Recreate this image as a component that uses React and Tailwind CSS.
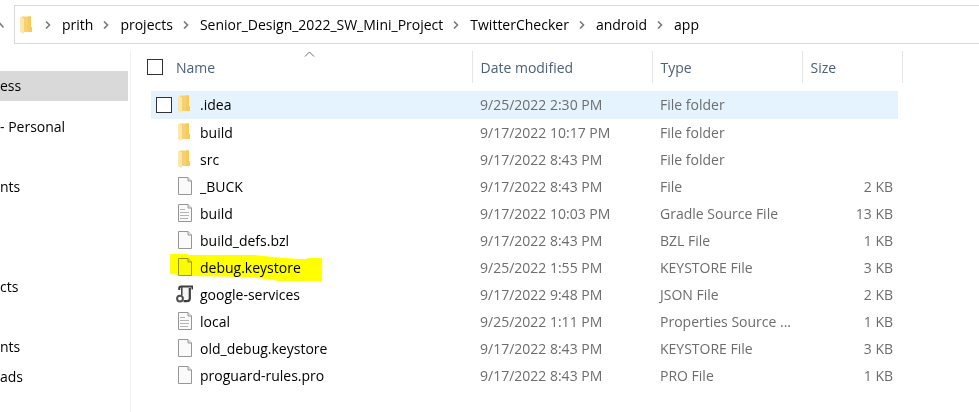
const crumbs = ["prith", "projects", "Senior_Design_2022_SW_Mini_Project", "TwitterChecker", "android", "app"];

const files = [
  { name: ".idea", date: "9/25/2022 2:30 PM", type: "File folder", size: "", icon: "folder", hovered: true },
  { name: "build", date: "9/17/2022 10:17 PM", type: "File folder", size: "", icon: "folder" },
  { name: "src", date: "9/17/2022 8:43 PM", type: "File folder", size: "", icon: "folder" },
  { name: "_BUCK", date: "9/17/2022 8:43 PM", type: "File", size: "2 KB", icon: "file" },
  { name: "build", date: "9/17/2022 10:03 PM", type: "Gradle Source File", size: "13 KB", icon: "text" },
  { name: "build_defs.bzl", date: "9/17/2022 8:43 PM", type: "BZL File", size: "1 KB", icon: "file" },
  { name: "debug.keystore", date: "9/25/2022 1:55 PM", type: "KEYSTORE File", size: "3 KB", icon: "file", marked: true },
  { name: "google-services", date: "9/17/2022 9:48 PM", type: "JSON File", size: "2 KB", icon: "json" },
  { name: "local", date: "9/25/2022 1:11 PM", type: "Properties Source ...", size: "1 KB", icon: "text" },
  { name: "old_debug.keystore", date: "9/17/2022 8:43 PM", type: "KEYSTORE File", size: "3 KB", icon: "file" },
  { name: "proguard-rules.pro", date: "9/17/2022 8:43 PM", type: "PRO File", size: "1 KB", icon: "file" },
];

function FolderIcon() {
  return (
    <svg className="h-[18px] w-4 shrink-0" viewBox="0 0 16 18" aria-hidden="true">
      <path d="M3 0.5h9v10.5h1v5H3z" fill="#f7d070" />
      <path d="M9 0.5h3v10.5h1v5H9z" fill="#f5ca60" />
      <path d="M1 0.5l4 2v15l-1 0.3l-3-1.8z" fill="#ffe8a6" />
    </svg>
  );
}

function FileIcon({ lines }) {
  return (
    <svg className="h-[18px] w-4 shrink-0" viewBox="0 0 16 18" aria-hidden="true">
      <path d="M1.5 0.5h9.5l3.5 3.5v13.5h-13z" fill="#fafafa" stroke="#969696" />
      <path d="M11 0.5v3.5h3.5" fill="#e8e8e8" stroke="#969696" />
      {lines && <path d="M3 5.5h5M3 8.5h9M3 11.5h6M9 11.5h3M3 14.5h8" fill="none" stroke="#b4b4b4" />}
    </svg>
  );
}

function JsonIcon() {
  return (
    <svg className="-ml-px h-[18px] w-[17px] shrink-0" viewBox="0 0 17 18" fill="none" aria-hidden="true">
      <path d="M5.5 1.5h10v2.5h-1.5v9.5q0 2.5-3 2.5h-4" fill="#f5f5f5" />
      <path d="M3.2 5V3.2q0-1.7 2-1.7h11.3v3" stroke="#3f3f3f" strokeWidth="2" />
      <path d="M5.8 2v8" stroke="#4a4a4a" strokeWidth="1.6" />
      <path d="M13.8 3v10.5q0 2.6-2.8 2.6H7.5" stroke="#3f3f3f" strokeWidth="2.2" />
      <circle cx="4" cy="13.6" r="2.9" fill="#fff" stroke="#505050" strokeWidth="2" />
    </svg>
  );
}

function ItemIcon({ kind }) {
  if (kind === "folder") return <FolderIcon />;
  if (kind === "json") return <JsonIcon />;
  return <FileIcon lines={kind === "text"} />;
}

function Chevron() {
  return (
    <svg className="mr-[11px] ml-[10px] h-2 w-[6px] shrink-0" viewBox="0 0 6 8" fill="none" aria-hidden="true">
      <path d="M1 0.5l3.5 3.5L1 7.5" stroke="#7a7a7a" strokeWidth="1.6" />
    </svg>
  );
}

function AddressBar() {
  return (
    <header className="flex items-center pt-[5px]">
      <button type="button" aria-label="Up" className="w-[14px]">
        <svg className="h-2 w-1" viewBox="0 0 4 8" fill="none" aria-hidden="true">
          <path d="M-3 7l3-4.500l3.500 4" stroke="#7a7a7a" strokeWidth="1.500" />
        </svg>
      </button>
      <nav aria-label="Path" className="flex h-[39px] flex-1 items-center border-y border-l border-[#d9d9d9] pl-1">
        <FolderIcon />
        <ol className="flex items-center">
          {crumbs.map((crumb) => (
            <li key={crumb} className="flex items-center">
              <Chevron />
              <a href="#" className="text-black">{crumb}</a>
            </li>
          ))}
        </ol>
      </nav>
    </header>
  );
}

function SideItem({ children, className = "" }) {
  return (
    <li className={`flex h-[30px] items-center ${className}`}>
      <a href="#">{children}</a>
    </li>
  );
}

function Sidebar() {
  return (
    <nav aria-label="Folders" className="w-[131px] shrink-0 border-r border-[#f0f0f0] pt-5 pr-[2px]">
      <ul>
        <SideItem className="bg-[#d9d9d9]">ess</SideItem>
        <SideItem className="mt-[11px]">- Personal</SideItem>
        <SideItem className="mt-[30px]">nts</SideItem>
        <SideItem className="mt-[70px]">cts</SideItem>
        <SideItem className="mt-[30px]">nts</SideItem>
        <SideItem>ads</SideItem>
      </ul>
    </nav>
  );
}

const checkbox = "block h-4 w-4 shrink-0 appearance-none border border-[#333333] bg-white checked:bg-[#0078d7]";

function FileRow({ file }) {
  const fill = file.hovered ? "bg-[#e5f3ff]" : "";
  return (
    <tr className={file.hovered ? "h-7" : "h-[27px]"}>
      <td />
      <td className={`pl-[5px] ${fill}`}>
        <div className="relative flex items-center">
          {file.hovered ? (
            <input type="checkbox" aria-label={`Select ${file.name}`} className={checkbox} />
          ) : (
            <span className="w-4" />
          )}
          <span className="mr-[7px] ml-[5px] flex w-4 justify-end pb-[2px]">
            <ItemIcon kind={file.icon} />
          </span>
          <span className="text-black">{file.name}</span>
          {file.marked && (
            <svg
              className="pointer-events-none absolute -top-1 left-[14px] h-7 w-[152px] mix-blend-multiply"
              viewBox="0 0 152 28"
              aria-hidden="true"
            >
              <path d="M0 0H18V1H85L103 3L128 5H137V4H152V27H108L103 26L78 23L20 22L0 20Z" fill="#ffff00" />
            </svg>
          )}
        </div>
      </td>
      <td className={`pl-2 ${fill}`}>{file.date}</td>
      <td className={`pl-2 ${fill}`}>{file.type}</td>
      <td className={`pr-[5px] text-right ${fill}`}>{file.size}</td>
      <td />
    </tr>
  );
}

function HeaderCell({ children, span }) {
  return (
    <th colSpan={span} className="border-r border-[#e5e5e5] pl-2 font-normal">
      <button type="button" className="pt-[2px]">{children}</button>
    </th>
  );
}

function FileTable() {
  return (
    <table className="w-[771px] table-fixed self-start text-left text-[#6d6d6d]">
      <colgroup>
        <col className="w-5" />
        <col className="w-[321px]" />
        <col className="w-[180px]" />
        <col className="w-[150px]" />
        <col className="w-24" />
        <col className="w-1" />
      </colgroup>
      <thead className="text-[#4c607a]">
        <tr className="h-8">
          <th colSpan={2} className="relative border-r border-[#e5e5e5] pl-4 font-normal">
            <div className="flex items-center gap-[13px]">
              <input type="checkbox" aria-label="Select all" className={checkbox} />
              <button type="button" className="pt-[2px]">Name</button>
            </div>
            <svg className="absolute top-0 left-[173px] h-[6px] w-[11px]" viewBox="0 0 11 6" fill="none" aria-hidden="true">
              <path d="M1 5.500l4.500-4.500l4.500 4.500" stroke="#6d6d6d" />
            </svg>
          </th>
          <HeaderCell>Date modified</HeaderCell>
          <HeaderCell>Type</HeaderCell>
          <HeaderCell span={2}>Size</HeaderCell>
        </tr>
      </thead>
      <tbody className="before:block before:h-2">
        {files.map((file) => (
          <FileRow key={file.name + file.type} file={file} />
        ))}
      </tbody>
    </table>
  );
}

export default function App() {
  return (
    <div className="flex min-h-screen flex-col overflow-hidden bg-white font-['Open_Sans','Noto_Sans',sans-serif] text-sm leading-5 whitespace-nowrap text-black">
      <AddressBar />
      <div className="flex flex-1 pt-[7px]">
        <Sidebar />
        <FileTable />
      </div>
    </div>
  );
}
